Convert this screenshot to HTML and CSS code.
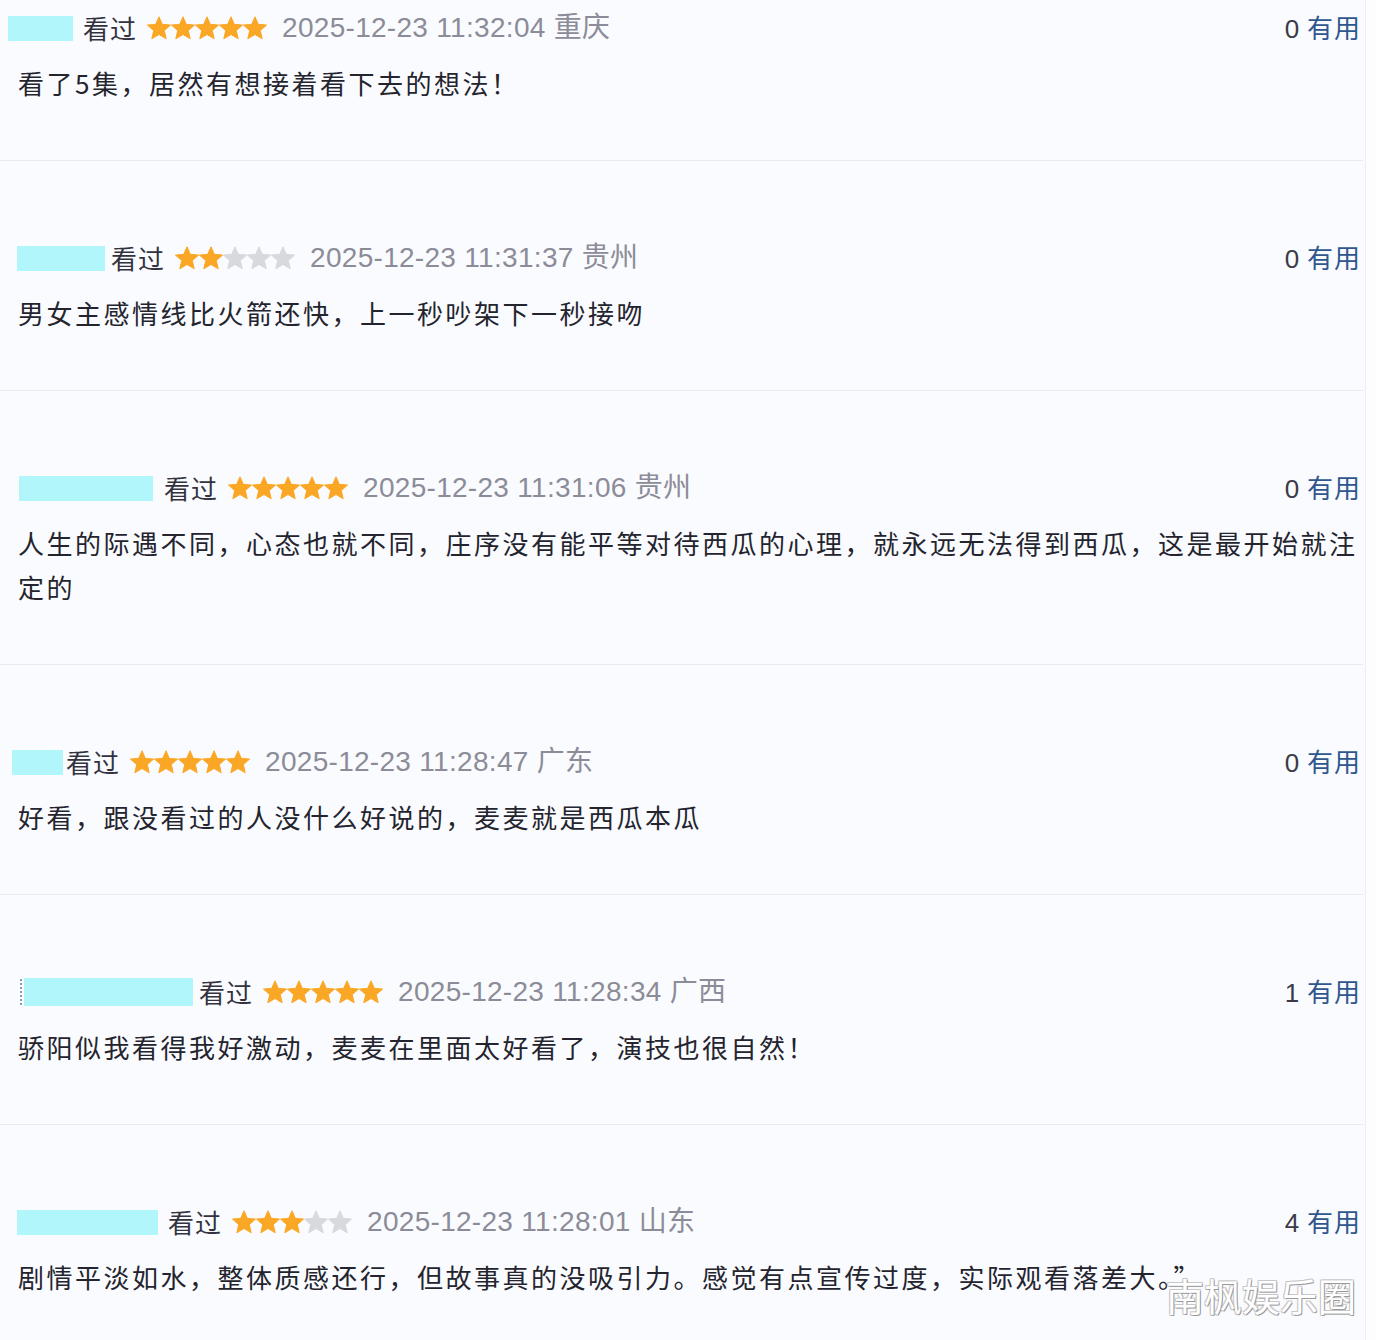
FILE: index.html
```html
<!DOCTYPE html>
<html lang="zh-CN">
<head>
<meta charset="utf-8">
<title>短评</title>
<link rel="stylesheet" href="styles.css">
</head>
<body>
<svg width="0" height="0" class="defs">
  <defs>
    <polygon id="star" stroke-linejoin="round" stroke-width="1" points="12,0.8 15.3,8.3 23.6,9.1 17.3,14.6 19.2,22.8 12,18.5 4.8,22.8 6.7,14.6 0.4,9.1 8.7,8.3"/>
  </defs>
</svg>
<div class="page">
  <ul class="list">
    <li class="item first">
      <div class="head">
        <span class="mask m1"></span>
        <span class="seen">看过</span>
        <span class="stars">
          <svg class="on" viewBox="0 0 24 24"><use href="#star"/></svg><svg class="on" viewBox="0 0 24 24"><use href="#star"/></svg><svg class="on" viewBox="0 0 24 24"><use href="#star"/></svg><svg class="on" viewBox="0 0 24 24"><use href="#star"/></svg><svg class="on" viewBox="0 0 24 24"><use href="#star"/></svg>
        </span>
        <span class="meta">2025-12-23 11:32:04 重庆</span>
        <span class="vote"><span class="num">0</span> <span class="useful">有用</span></span>
      </div>
      <p class="text">看了5集，居然有想接着看下去的想法！</p>
    </li>
    <li class="item">
      <div class="head">
        <span class="mask m2"></span>
        <span class="seen">看过</span>
        <span class="stars">
          <svg class="on" viewBox="0 0 24 24"><use href="#star"/></svg><svg class="on" viewBox="0 0 24 24"><use href="#star"/></svg><svg class="off" viewBox="0 0 24 24"><use href="#star"/></svg><svg class="off" viewBox="0 0 24 24"><use href="#star"/></svg><svg class="off" viewBox="0 0 24 24"><use href="#star"/></svg>
        </span>
        <span class="meta">2025-12-23 11:31:37 贵州</span>
        <span class="vote"><span class="num">0</span> <span class="useful">有用</span></span>
      </div>
      <p class="text">男女主感情线比火箭还快，上一秒吵架下一秒接吻</p>
    </li>
    <li class="item">
      <div class="head">
        <span class="mask m3"></span>
        <span class="seen">看过</span>
        <span class="stars">
          <svg class="on" viewBox="0 0 24 24"><use href="#star"/></svg><svg class="on" viewBox="0 0 24 24"><use href="#star"/></svg><svg class="on" viewBox="0 0 24 24"><use href="#star"/></svg><svg class="on" viewBox="0 0 24 24"><use href="#star"/></svg><svg class="on" viewBox="0 0 24 24"><use href="#star"/></svg>
        </span>
        <span class="meta">2025-12-23 11:31:06 贵州</span>
        <span class="vote"><span class="num">0</span> <span class="useful">有用</span></span>
      </div>
      <p class="text">人生的际遇不同，心态也就不同，庄序没有能平等对待西瓜的心理，就永远无法得到西瓜，这是最开始就注定的</p>
    </li>
    <li class="item">
      <div class="head">
        <span class="mask m4"></span>
        <span class="seen">看过</span>
        <span class="stars">
          <svg class="on" viewBox="0 0 24 24"><use href="#star"/></svg><svg class="on" viewBox="0 0 24 24"><use href="#star"/></svg><svg class="on" viewBox="0 0 24 24"><use href="#star"/></svg><svg class="on" viewBox="0 0 24 24"><use href="#star"/></svg><svg class="on" viewBox="0 0 24 24"><use href="#star"/></svg>
        </span>
        <span class="meta">2025-12-23 11:28:47 广东</span>
        <span class="vote"><span class="num">0</span> <span class="useful">有用</span></span>
      </div>
      <p class="text">好看，跟没看过的人没什么好说的，麦麦就是西瓜本瓜</p>
    </li>
    <li class="item">
      <div class="head">
        <span class="dots"></span>
        <span class="mask m5"></span>
        <span class="seen">看过</span>
        <span class="stars">
          <svg class="on" viewBox="0 0 24 24"><use href="#star"/></svg><svg class="on" viewBox="0 0 24 24"><use href="#star"/></svg><svg class="on" viewBox="0 0 24 24"><use href="#star"/></svg><svg class="on" viewBox="0 0 24 24"><use href="#star"/></svg><svg class="on" viewBox="0 0 24 24"><use href="#star"/></svg>
        </span>
        <span class="meta">2025-12-23 11:28:34 广西</span>
        <span class="vote"><span class="num">1</span> <span class="useful">有用</span></span>
      </div>
      <p class="text">骄阳似我看得我好激动，麦麦在里面太好看了，演技也很自然！</p>
    </li>
    <li class="item">
      <div class="head">
        <span class="mask m6"></span>
        <span class="seen">看过</span>
        <span class="stars">
          <svg class="on" viewBox="0 0 24 24"><use href="#star"/></svg><svg class="on" viewBox="0 0 24 24"><use href="#star"/></svg><svg class="on" viewBox="0 0 24 24"><use href="#star"/></svg><svg class="off" viewBox="0 0 24 24"><use href="#star"/></svg><svg class="off" viewBox="0 0 24 24"><use href="#star"/></svg>
        </span>
        <span class="meta">2025-12-23 11:28:01 山东</span>
        <span class="vote"><span class="num">4</span> <span class="useful">有用</span></span>
      </div>
      <p class="text">剧情平淡如水，整体质感还行，但故事真的没吸引力。感觉有点宣传过度，实际观看落差大。”</p>
    </li>
  </ul>
  <div class="watermark">南枫娱乐圈</div>
</div>
</body>
</html>
```
FILE: styles.css
```css
html, body {
  margin: 0;
  padding: 0;
  background: #fdfdfe;
}
body {
  width: 1376px;
  height: 1340px;
  overflow: hidden;
  font-family: "Noto Sans CJK SC", "Liberation Sans", sans-serif;
}
.defs {
  position: absolute;
  width: 0;
  height: 0;
}
.page {
  position: relative;
  width: 1376px;
  height: 1340px;
}
.list {
  list-style: none;
  margin: 0;
  padding: 0;
  width: 1365px;
  height: 1340px;
  background: #fafbfe;
  border-right: 1px solid #eceef3;
}
.item {
  padding: 79px 0 55px 0;
  margin-right: 2px;
  border-bottom: 1px solid #e9ebf0;
}
.item.first {
  padding-top: 10px;
}
.head {
  display: flex;
  align-items: center;
  height: 36px;
}
.mask {
  display: block;
  height: 25px;
  background: #b0f6fa;
}
.m1 { width: 65px; margin-left: 8px; margin-right: 10px; }
.m2 { width: 88px; margin-left: 17px; margin-right: 6px; }
.m3 { width: 134px; margin-left: 19px; margin-right: 11px; }
.m4 { width: 51px; margin-left: 12px; margin-right: 3px; }
.m5 { width: 169px; margin-left: 2px; margin-right: 6px; height: 28px; }
.m6 { width: 141px; margin-left: 17px; margin-right: 10px; }
.dots {
  display: block;
  width: 0;
  height: 26px;
  margin-left: 20px;
  border-left: 2px dotted #8a9aa8;
}
.seen {
  font-size: 26px;
  letter-spacing: 1px;
  color: #33333f;
  line-height: 36px;
}
.stars {
  display: flex;
  margin-left: 10px;
  margin-right: 15px;
}
.stars svg {
  display: block;
  width: 24px;
  height: 24px;
}
.stars .on { fill: #fba726; stroke: #fba726; }
.stars .off { fill: #d8d9de; stroke: #d8d9de; }
.meta {
  font-family: "Liberation Sans", "Noto Sans CJK SC", sans-serif;
  font-size: 28px;
  letter-spacing: 0.3px;
  color: #8c8c98;
  line-height: 36px;
}
.vote {
  margin-left: auto;
  margin-right: 2px;
  font-size: 26px;
  line-height: 36px;
  letter-spacing: 1px;
  white-space: nowrap;
}
.num {
  font-family: "Liberation Sans", sans-serif;
  color: #3a3a48;
}
.useful {
  color: #2f578e;
}
.text {
  margin: 15px 0 0 0;
  padding-left: 18px;
  font-size: 26px;
  letter-spacing: 2.5px;
  line-height: 44px;
  color: #24242e;
}
.watermark {
  position: absolute;
  right: 20px;
  bottom: 22px;
  font-size: 38px;
  line-height: 46px;
  color: #ffffff;
  text-shadow: 1px 1px 0 #9a9a9a, -1px -1px 0 #c8c8c8, 1px -1px 0 #c8c8c8, -1px 1px 0 #c8c8c8;
}
```
